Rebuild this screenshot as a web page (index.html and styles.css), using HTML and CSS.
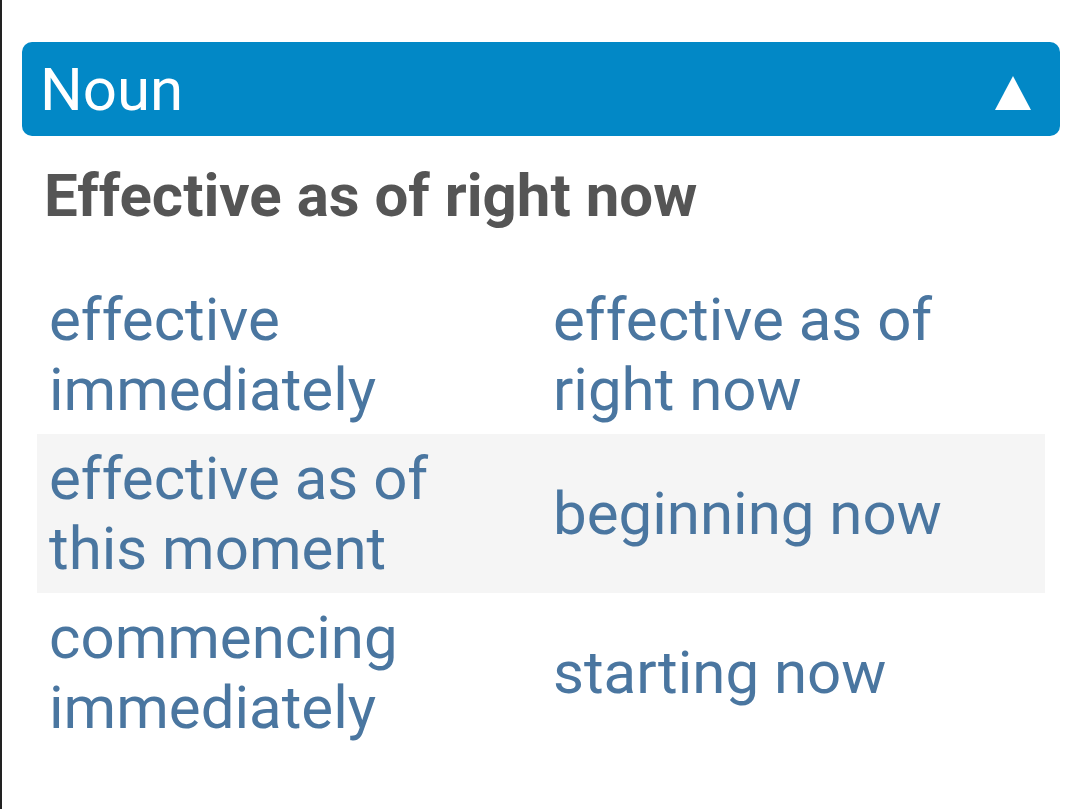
FILE: index.html
```html
<!DOCTYPE html>
<html lang="en">
<head>
    <meta charset="UTF-8">
    <meta name="viewport" content="width=device-width, initial-scale=1.0">
    <title>Effective as of right now</title>
    <link rel="stylesheet" href="styles.css">
</head>
<body>
    <div class="page">
        <div class="section-bar">
            <span class="section-title">Noun</span>
            <svg class="toggle" width="36" height="34" viewBox="0 0 36 34">
                <polygon points="18,0 36,34 0,34" fill="white"/>
            </svg>
        </div>
        <h2 class="entry-title">Effective as of right now</h2>
        <div class="synonyms">
            <div class="syn-row">
                <a class="syn">effective immediately</a>
                <a class="syn">effective as of right now</a>
            </div>
            <div class="syn-row shaded">
                <a class="syn">effective as of this moment</a>
                <a class="syn">beginning now</a>
            </div>
            <div class="syn-row">
                <a class="syn">commencing immediately</a>
                <a class="syn">starting now</a>
            </div>
        </div>
    </div>
</body>
</html>
```

FILE: styles.css
```css
body { margin: 0; background: white; font-family: Roboto, "Liberation Sans", sans-serif; }
.page {
    min-height: 809px;
    box-sizing: border-box;
    border-left: 2px solid #222;
    padding: 42px 20px 0 20px;
}
.section-bar {
    display: flex;
    align-items: center;
    justify-content: space-between;
    height: 94px;
    padding: 0 29px 0 18px;
    background-color: #0288c6;
    border-radius: 10px;
    color: white;
}
.section-title { font-size: 60px; }
.toggle { margin-top: 7px; }
.entry-title {
    margin: 20px 0 0 22px;
    font-size: 60px;
    font-weight: bold;
    color: #555;
    line-height: 80px;
}
.synonyms {
    margin: 39px 15px 0 15px;
}
.syn-row {
    display: grid;
    grid-template-columns: 1fr 1fr;
    min-height: 159px;
}
.syn-row.shaded { background-color: #f5f5f5; }
.syn {
    align-self: center;
    padding: 0 12px;
    font-size: 60px;
    line-height: 70px;
    color: #4a76a0;
}
```
